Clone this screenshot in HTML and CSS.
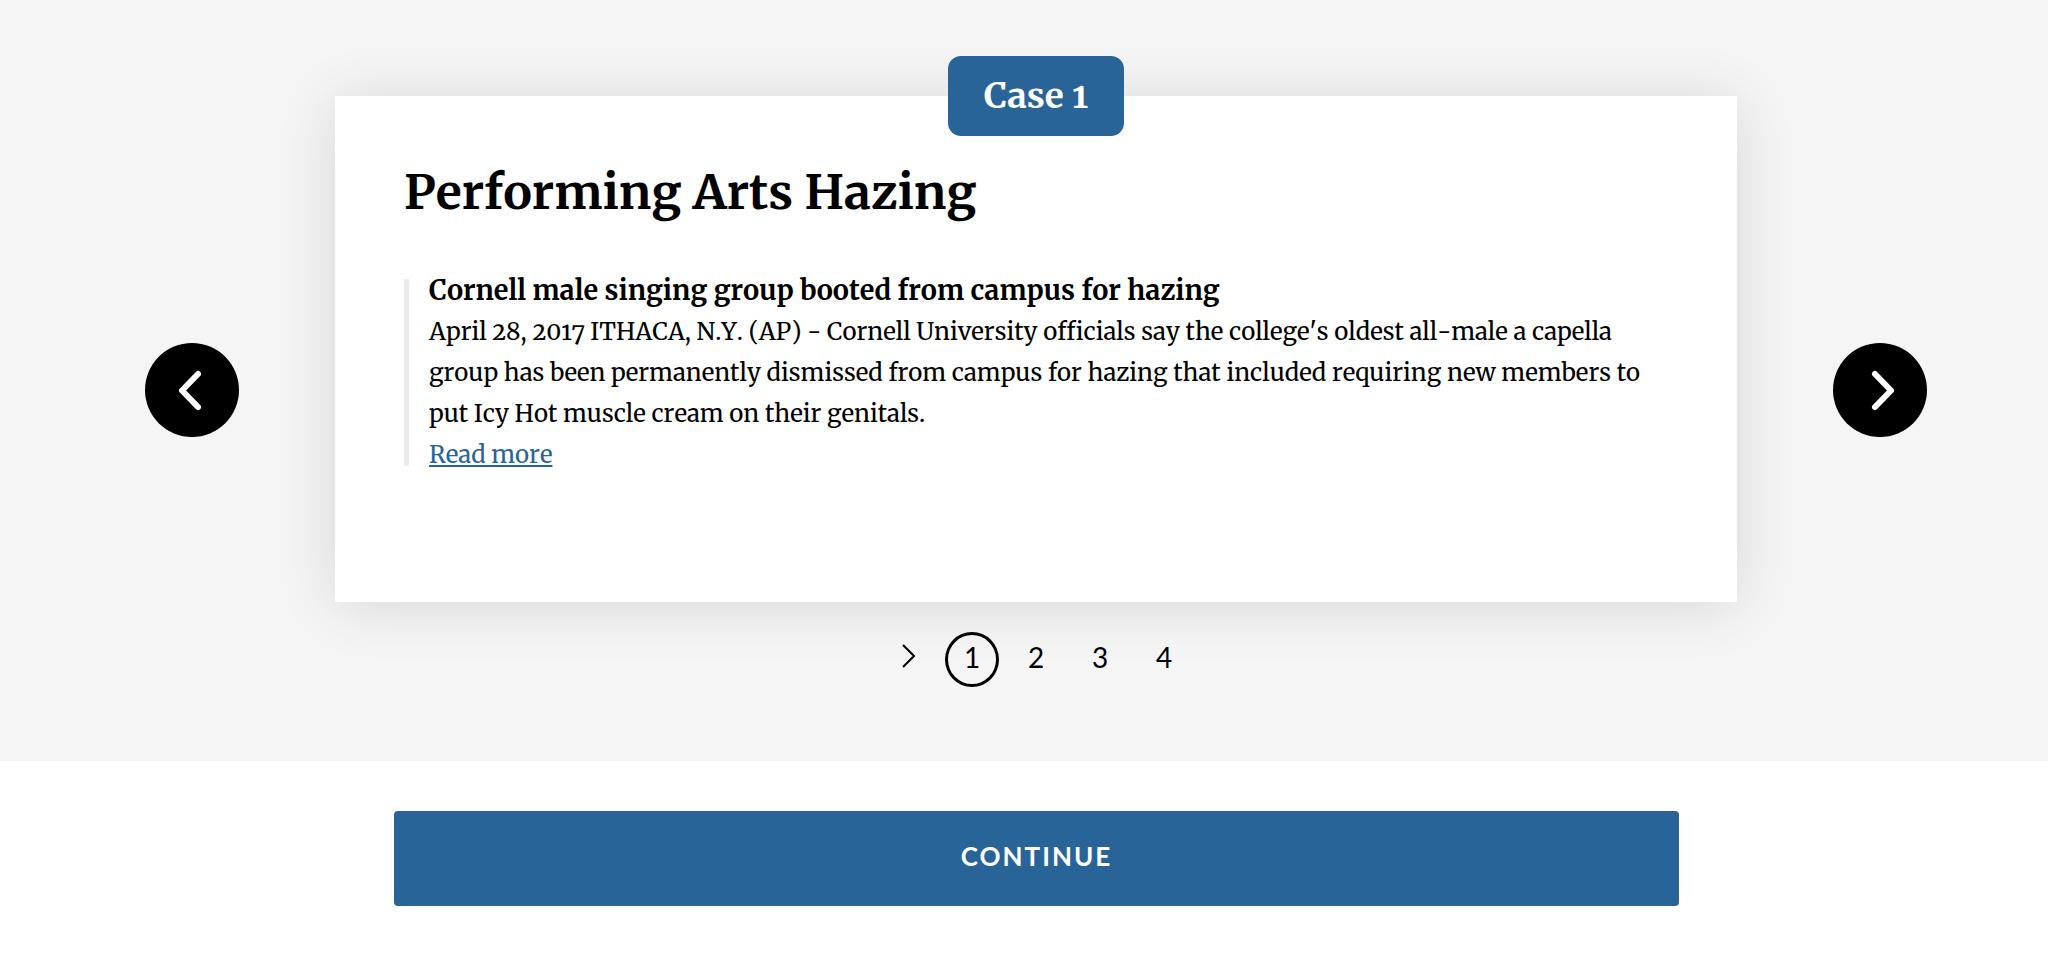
FILE: index.html
```
<!DOCTYPE html>
<html lang="en">
  <head>
    <meta charset="UTF-8" />
    <meta name="viewport" content="width=device-width, initial-scale=1" />
    <title>Performing Arts Hazing</title>
    <link rel="stylesheet" href="styles.css">
  </head>
  <body>
    <section class="carousel">
      <button type="button" class="arrow" aria-label="Previous case">
        <svg viewBox="0 0 94 94" aria-hidden="true">
          <path d="M53 31 L37 47.5 L53 64" />
        </svg>
      </button>
      <div class="slides">
        <article class="card">
          <div class="badge">Case 1</div>
          <h2>Performing Arts Hazing</h2>
          <blockquote>
            <div class="quote">
              <h3>Cornell male singing group booted from campus for hazing</h3>
              <p>April 28, 2017 ITHACA, N.Y. (AP) - Cornell University officials say the college's oldest all-male a capella group has been permanently dismissed from campus for hazing that included requiring new members to put Icy Hot muscle cream on their genitals.</p>
              <a href="#">Read more</a>
            </div>
          </blockquote>
        </article>
        <nav class="pager" aria-label="Cases">
          <button type="button" aria-label="Next">
            <svg viewBox="0 0 14 24" aria-hidden="true">
              <path d="M2 1 L13 12 L2 23" />
            </svg>
          </button>
          <button type="button" class="active" aria-current="true">1</button>
          <button type="button">2</button>
          <button type="button">3</button>
          <button type="button">4</button>
        </nav>
      </div>
      <button type="button" class="arrow" aria-label="Next case">
        <svg viewBox="0 0 94 94" aria-hidden="true">
          <path d="M42 31 L58 47.5 L42 64" />
        </svg>
      </button>
    </section>
    <div class="actions">
      <button type="button" class="continue">CONTINUE</button>
    </div>
  </body>
</html>
```
FILE: styles.css
```
* {
  box-sizing: border-box;
}

body {
  margin: 0;
  background-color: #fff;
  color: #000;
  font-family: Merriweather, "DejaVu Serif Condensed", "DejaVu Serif", serif;
  font-size: 24px;
  font-kerning: none;
  font-variant-numeric: oldstyle-nums;
  line-height: 41px;
}

button {
  padding: 0;
  border: none;
  background: none;
  color: inherit;
  font-family: Lato, sans-serif;
  cursor: pointer;
}

.carousel {
  display: grid;
  grid-template-columns: 94px 1fr 94px;
  align-items: center;
  gap: 96px;
  padding: 96px 121px 74px 145px;
  background-color: #f5f5f5;
}

.arrow {
  width: 94px;
  height: 94px;
  margin-bottom: 4px;
  border-radius: 50%;
  background-color: #000;
}

.arrow svg {
  display: block;
  fill: none;
  stroke: #fff;
  stroke-width: 6;
  stroke-linecap: round;
  stroke-linejoin: round;
}

.card {
  position: relative;
  min-height: 506px;
  padding: 64px 69px;
  background-color: #fff;
  box-shadow: 0 4px 56px rgba(0, 0, 0, 0.12);
}

.badge {
  position: absolute;
  top: -40px;
  left: 50%;
  width: 176px;
  height: 80px;
  transform: translateX(-50%);
  border-radius: 13px;
  background-color: #286497;
  color: #fff;
  font-size: 35px;
  font-weight: bold;
  line-height: 80px;
  text-align: center;
}

h2 {
  margin: 0 0 55px;
  font-size: 48px;
  line-height: 64px;
}

blockquote {
  display: flow-root;
  margin: 0;
  padding-left: 20px;
  border-left: 5px solid #ebebeb;
}

/* pulls the line spacing out so the bar hugs the text */
.quote {
  margin: -9px 0;
}

h3 {
  margin: 0;
  font-size: 27px;
  line-height: 41px;
}

p {
  margin: 0;
}

a {
  color: #286497;
}

.pager {
  display: flex;
  justify-content: center;
  gap: 10px;
  margin-top: 30px;
}

.pager button {
  width: 54px;
  height: 55px;
  padding-bottom: 6px;
  border: 3px solid transparent;
  border-radius: 50%;
  font-size: 28px;
}

.pager .active {
  border-color: #000;
}

.pager svg {
  width: 14px;
  height: 24px;
  fill: none;
  stroke: #000;
  stroke-width: 2;
}

.actions {
  padding: 50px 369px 62px 394px;
}

.continue {
  width: 100%;
  height: 95px;
  padding-bottom: 6px;
  border-radius: 4px;
  background-color: #286497;
  color: #fff;
  font-size: 26px;
  font-weight: bold;
  letter-spacing: 2px;
}
```
